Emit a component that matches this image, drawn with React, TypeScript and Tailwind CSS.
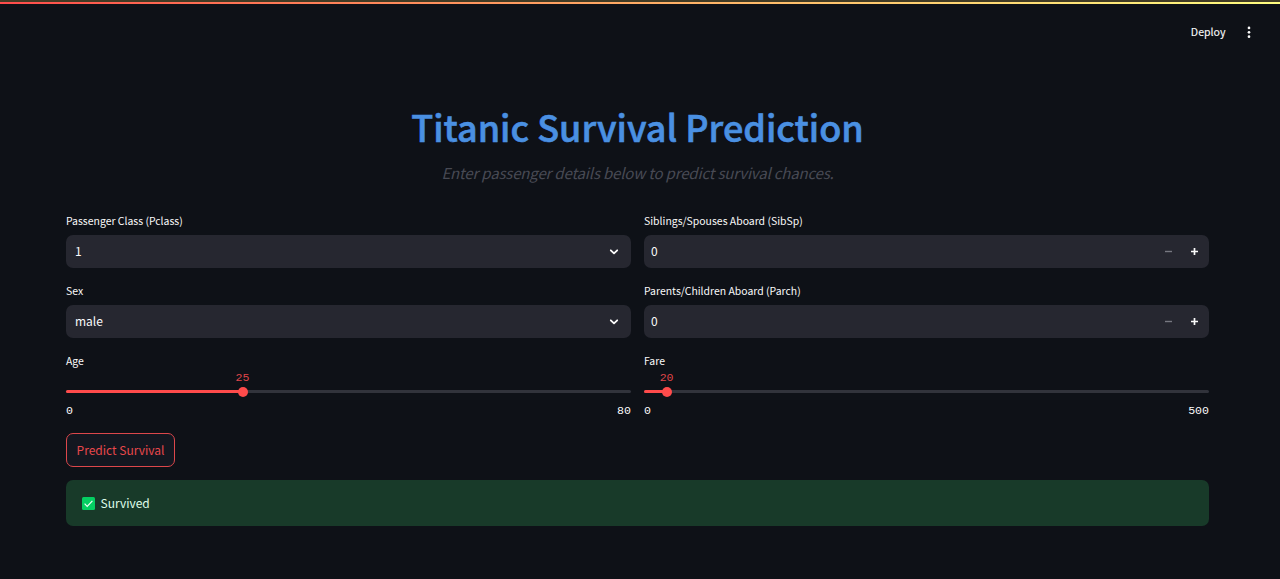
import type { ReactNode } from "react";

function Label({ children }: { children: ReactNode }) {
  return (
    <div className="flex h-[14px] items-center">
      <span className="whitespace-nowrap text-[10.45px] leading-[14px]">{children}</span>
    </div>
  );
}

function SelectField({ label, value }: { label: string; value: string }) {
  return (
    <div className="h-[70px]">
      <Label>{label}</Label>
      <div className="mt-[7px] flex h-[33px] items-center justify-between rounded-[7px] bg-[#262730] pr-[11px] pl-[9px]">
        <span className="pb-[2px] text-[12px] leading-5">{value}</span>
        <svg width="12" height="12" viewBox="0 0 12 12" fill="none" stroke="#fafafa" strokeWidth="1.8" strokeLinecap="round" strokeLinejoin="round">
          <path d="M2.8 4.3 6 7.4l3.2-3.1" />
        </svg>
      </div>
    </div>
  );
}

function NumberField({ label, value }: { label: string; value: number }) {
  return (
    <div className="h-[70px]">
      <Label>{label}</Label>
      <div className="mt-[7px] flex h-[33px] items-center rounded-[7px] bg-[#262730] pr-[10px] pl-[7px]">
        <span className="flex-1 pb-[2px] text-[12px] leading-5">{value}</span>
        <svg className="mr-[17.5px]" width="9" height="9" viewBox="0 0 9 9" stroke="#777881" strokeWidth="1.4">
          <path d="M1 4.5h7" />
        </svg>
        <svg width="9" height="9" viewBox="0 0 9 9" stroke="#fafafa" strokeWidth="1.7">
          <path d="M1 4.5h7M4.5 1v7" />
        </svg>
      </div>
    </div>
  );
}

function SliderField({ label, value, max }: { label: string; value: number; max: number }) {
  const position = `${(value / max) * 100}%`;
  return (
    <div className="h-[65px]">
      <Label>{label}</Label>
      <div className="relative mt-[22px] h-[3px] rounded-full bg-[#31333b]">
        <div className="h-full rounded-full bg-[#ff4b4b]" style={{ width: position }} />
        <div className="absolute top-1/2 size-[10px] -translate-x-1/2 -translate-y-1/2 rounded-full bg-[#ff4b4b]" style={{ left: position }} />
        <span className="absolute -top-[19px] -translate-x-1/2 font-['Liberation_Mono',monospace] text-[11.6px] leading-[14px] text-[#df4549]" style={{ left: position }}>
          {value}
        </span>
      </div>
      <div className="mt-[11px] flex justify-between font-['Liberation_Mono',monospace] text-[11.6px] leading-[14px]">
        <span>0</span>
        <span>{max}</span>
      </div>
    </div>
  );
}

export default function App() {
  return (
    <div className="flex h-[579px] w-full flex-col overflow-hidden bg-[#0e1117] font-['Noto_Sans_CJK_SC','Noto_Sans',sans-serif] text-[#fafafa]">
      <div className="h-[2px] shrink-0 bg-[#413b25]" />
      <div className="h-[2px] shrink-0 bg-linear-to-r from-[#ff4b4b] to-[#fffd80]" />
      <header className="flex h-[56px] shrink-0 items-center justify-end pr-[27.5px]">
        <span className="text-[10.6px] leading-4 [-webkit-text-stroke:0.1px_#fafafa]">Deploy</span>
        <svg className="ml-[19px]" width="8" height="14" viewBox="0 0 8 14" fill="#fafafa">
          <circle cx="4" cy="2.9" r="1.35" />
          <circle cx="4" cy="7.3" r="1.35" />
          <circle cx="4" cy="11.7" r="1.35" />
        </svg>
      </header>
      <main className="ml-[66px] w-[1143px]">
        <h1 className="mt-[42px] text-center text-[36px] leading-[48px] font-medium whitespace-nowrap text-[#4a90e2] [-webkit-text-stroke:0.6px_#4a90e2]">
          Titanic Survival Prediction
        </h1>
        <p className="mt-[12px] text-center text-[15px] leading-[22px] font-normal tracking-[-0.17px] whitespace-nowrap text-[#484a54] italic">
          Enter passenger details below to predict survival chances.
        </p>
        <div className="mt-[30px] grid grid-cols-2 gap-x-[13px]">
          <SelectField label="Passenger Class (Pclass)" value="1" />
          <NumberField label="Siblings/Spouses Aboard (SibSp)" value={0} />
          <SelectField label="Sex" value="male" />
          <NumberField label="Parents/Children Aboard (Parch)" value={0} />
          <SliderField label="Age" value={25} max={80} />
          <SliderField label="Fare" value={20} max={500} />
        </div>
        <button className="mt-[14px] flex h-[34px] w-[109px] items-center justify-center rounded-[7px] border border-[#dc474b] bg-[#131720] text-[12px] leading-5 whitespace-nowrap text-[#e8484c]">
          Predict Survival
        </button>
        <div className="mt-[13px] flex h-[46px] items-center rounded-[7px] bg-[#183a29] pl-[16px] text-[#dffde9]">
          <svg width="13" height="13" viewBox="0 0 13 13" fill="none">
            <rect width="13" height="13" rx="1.5" fill="#04cf62" />
            <path d="m2.6 6.7 2.6 2.6 5.2-5.4" stroke="#effff5" strokeWidth="1.2" />
          </svg>
          <span className="ml-[5.5px] text-[12px] leading-5">Survived</span>
        </div>
      </main>
    </div>
  );
}
